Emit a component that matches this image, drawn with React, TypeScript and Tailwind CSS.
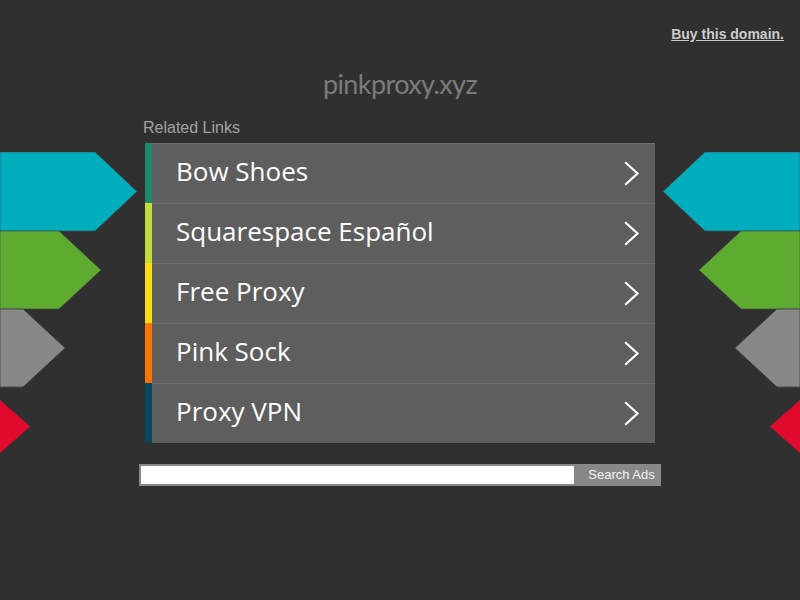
import React from 'react';

const links = [
  { label: 'Bow Shoes', color: 'bg-[#1e8a6c]' },
  { label: 'Squarespace Español', color: 'bg-[#c4dd3a]' },
  { label: 'Free Proxy', color: 'bg-[#ffdd11]' },
  { label: 'Pink Sock', color: 'bg-[#ff7300]' },
  { label: 'Proxy VPN', color: 'bg-[#03485c]' },
];

// decorative arrow ribbons on the sides of the page
const Arrows: React.FC<{ className?: string }> = ({ className }) => (
  <svg width="140" height="302" viewBox="0 0 140 302" className={className}>
    <path d="M0 0H95L137 39.5L95 79H0Z" fill="#00adbd" stroke="#3f4a4c" strokeWidth="0.6" />
    <path d="M0 79H59L101 118L59 157H0Z" fill="#5dab2f" stroke="#444" strokeWidth="0.6" />
    <path d="M0 157H23L65 196L23 235H0Z" fill="#888888" stroke="#4a4a4a" strokeWidth="1" />
    <path d="M0 248L30 274.5L0 301Z" fill="#e00a2d" />
  </svg>
);

const Chevron = () => (
  <svg width="16" height="25" viewBox="0 0 16 25" fill="none" stroke="white" strokeWidth="2.2" strokeLinecap="square">
    <path d="M2 2L13.5 12.5L2 23" />
  </svg>
);

export default function App() {
  return (
    <div className="relative min-h-screen w-full overflow-hidden bg-[#303030] font-['Liberation_Sans',Arial,sans-serif]">
      <Arrows className="absolute left-0 top-[152px]" />
      <Arrows className="absolute right-0 top-[152px] -scale-x-100" />

      <div className="flex justify-end pr-4 pt-[24px]">
        <a href="#" className="text-[14px] font-bold text-[#cccccc] underline">
          Buy this domain.
        </a>
      </div>

      <h1 className="mt-[21px] text-center font-['Lato',sans-serif] text-[27px] leading-[36px] tracking-[-0.6px] text-[#7b7b7b]">
        pinkproxy.xyz
      </h1>

      <div className="mx-auto mt-[17px] w-[522px]">
        <div className="pl-1 text-[16px] leading-[18px] text-[#a2a2a2]">Related Links</div>

        <div className="mx-auto mt-[6px] w-[510px]">
          {links.map((l) => (
            <a key={l.label} href="#" className="flex h-[60px]">
              <div className={`w-[7px] shrink-0 ${l.color}`} />
              <div className="flex flex-1 items-center justify-between border-t border-[#6e6e6e] bg-[#5e5e5e] pl-[24px] pr-[15px]">
                <span className="pb-[4px] font-['Open_Sans',sans-serif] text-[26px] text-white">{l.label}</span>
                <Chevron />
              </div>
            </a>
          ))}
        </div>

        <div className="mt-[21px] flex h-[22px]">
          <input className="h-full flex-1 border-2 border-[#888] bg-white outline-none" />
          <button className="h-full w-[85px] bg-[#888] pl-[6px] text-[13px] text-[#f2f2f2]">Search Ads</button>
        </div>
      </div>
    </div>
  );
}
